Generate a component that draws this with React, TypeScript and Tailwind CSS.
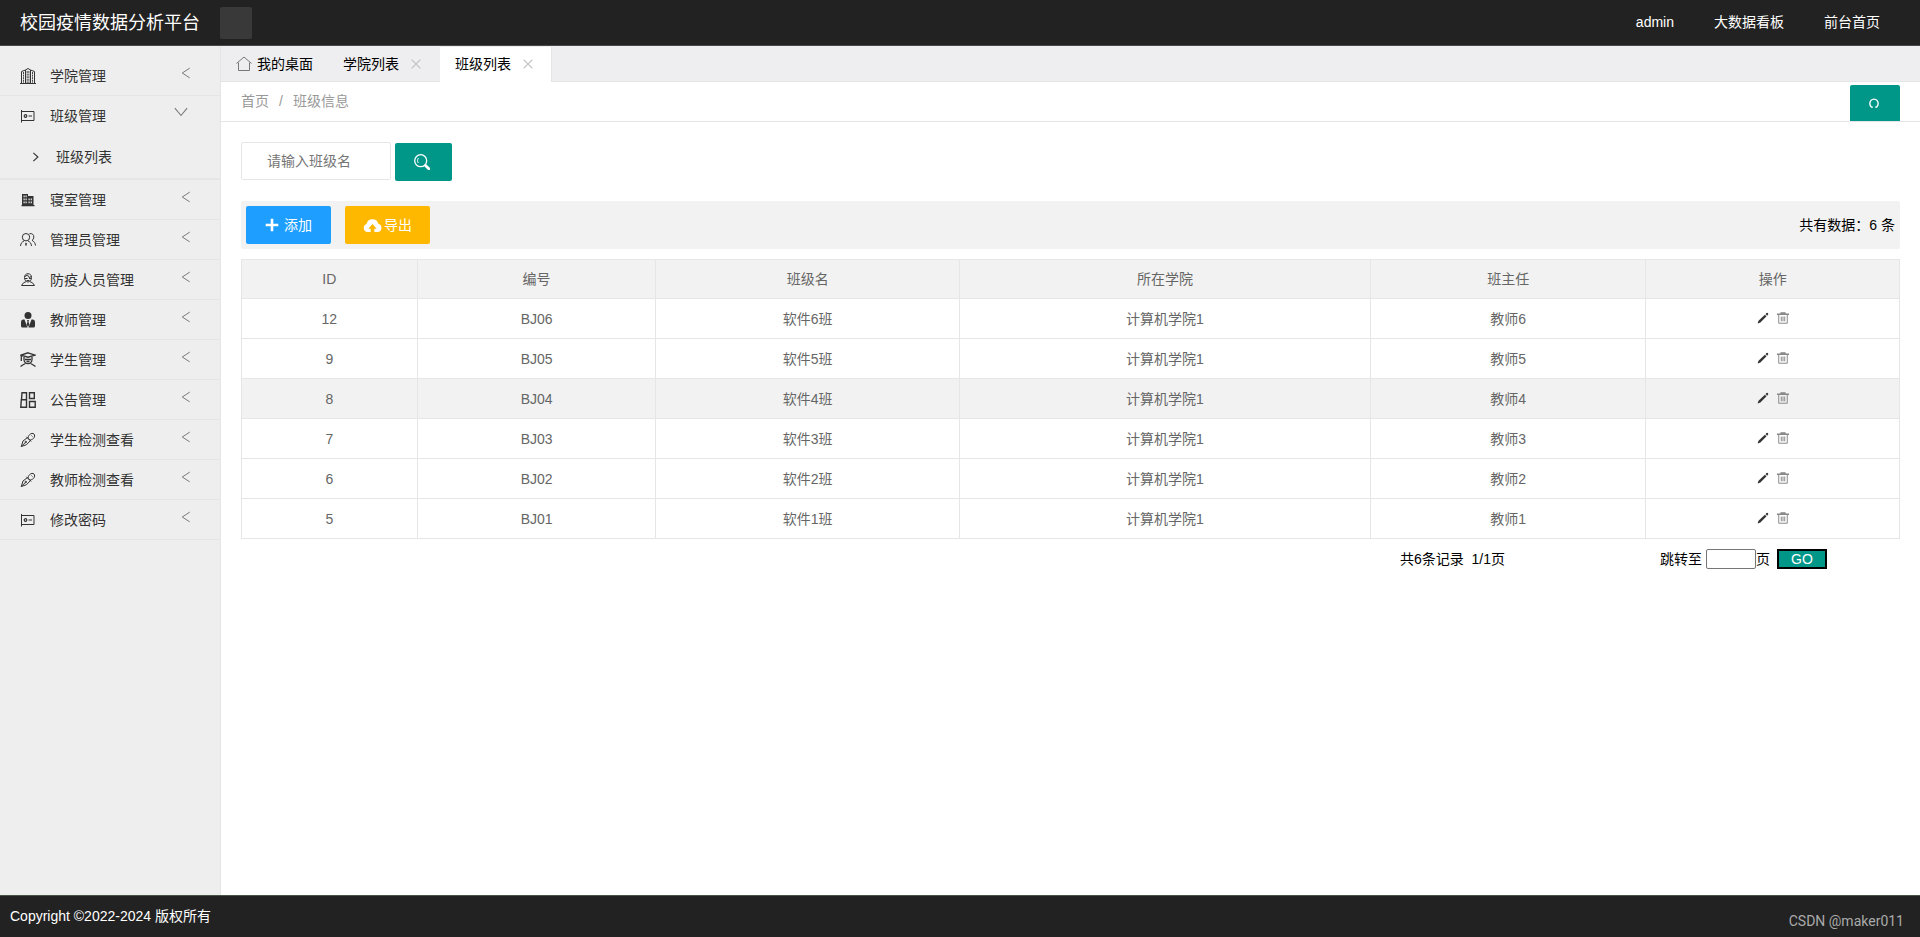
import { useState } from 'react';
import type { ReactNode } from 'react';
import clsx from 'clsx';

function Svg({ children, className = 'size-4' }: { children: ReactNode; className?: string }) {
  return (
    <svg viewBox="0 0 16 16" className={clsx('shrink-0', className)} fill="none" stroke="currentColor" strokeWidth="1" aria-hidden="true">
      {children}
    </svg>
  );
}

const CollegeIcon = () => (
  <Svg>
    <path d="M0 15.500h16M1.500 15V3.500L5.500 2V15M5.500 2 8 .5 10.500 2M10.500 15V2l4 1.500V15" />
    <path d="M3.500 4v11M7.200 3v12M8.900 3v12M12.500 4v11" strokeDasharray="2 .6" strokeWidth=".9" />
  </Svg>
);

const CardIcon = () => (
  <Svg>
    <path d="M1.500 2v12.500M1.500 3.500h12.500v9h-12.500" />
    <circle cx="5.500" cy="8" r="1.300" strokeWidth="1.200" />
    <path d="M8.500 8h3.500" />
  </Svg>
);

const DormIcon = () => (
  <Svg>
    <path fill="currentColor" stroke="none" fillRule="evenodd" d="M2 2h6v2h5.500v9H14.500v1.200H1.500V13H2zM3.500 3.500v1.700h1.200V3.500zm2 0v1.700h1.200V3.500zm-2 3v1.700h1.200V6.500zm2 0v1.700h1.200V6.500zm-2 3v1.700h1.200V9.500zm2 0v1.700h1.200V9.500zm3-3v1.700h1.200V6.500zm2.200 0v1.700h1.200V6.500zm-2.200 3v1.700h1.200V9.500zm2.200 0v1.700h1.200V9.500z" />
  </Svg>
);

const AdminIcon = () => (
  <Svg>
    <circle cx="6" cy="5.200" r="3.700" />
    <path d="M.5 14c.2-2.700 1.600-4.200 3.500-5M11.500 14c-.2-2.700-1.600-4.200-3.500-5M9.500 1.700c2.500-.7 4.500 1 4.300 3.300-.1 1.700-.8 2.700-1.800 3.400 2 .9 3.300 2.700 3.500 5.100M6 10.800v3M5 12h2" />
  </Svg>
);

const MedicIcon = () => (
  <Svg>
    <path d="M4.500 5.500C4.500 3 6 1.700 8 1.700s3.500 1.300 3.500 3.800S10 10 8 10 4.500 8 4.500 5.500ZM5 4.500l2.500-1.500 1.500 2.500 2.500-1M5 6.500h2.500M9 6.500h2M6.500 8.500h3" />
    <path d="M6 9.700 3.500 10.800 1.500 13.500h13L12.500 10.800 10 9.700" />
  </Svg>
);

const TeacherIcon = () => (
  <Svg>
    <circle cx="8" cy="3.500" r="3.500" fill="currentColor" stroke="none" />
    <path fill="currentColor" stroke="none" d="M4.500 7.500 7.500 15.500H2.500Q1 15.500 1 14V10Q1 7.800 3 7.500ZM11.500 7.500 8.500 15.500h5Q15 15.500 15 14V10q0-2.200-2-2.500zM7 8h2l-.5 1.600.8 3L8 15l-1.300-2.400.8-3z" />
  </Svg>
);

const StudentIcon = () => (
  <Svg>
    <path strokeWidth="1.300" d="M8 .8 15 3.200 8 5.200 1 3.200zM1.300 3.500V9M4 5v2.500C4 10 6 11.600 8 11.600S12 10 12 7.500V5" />
    <path strokeWidth="1.300" d="M5.500 11.500C3 12.500 2 13.500 .5 14.500M10.500 11.500c2.500 1 3.500 2 5 3M5 7.500h6M6.500 9.500h3" />
  </Svg>
);

const NoticeIcon = () => (
  <Svg>
    <path strokeWidth="1.400" d="M2 .8h4.500v7H1.500zM1.300 7.800H6.500v7.400H.8zM9.500 .8h4.800v5.700H9.500zM9.500 9.500h5.700v5.700H9.500z" />
  </Svg>
);

const TestIcon = () => (
  <Svg>
    <path d="M1.300 14.500 3 9 7.300 5.700l3 3-3.800 4zM1.300 14.500l4-4M6.500 4.800l4.700 4.700M8 6c.5-1 .2-2 1.500-3.300 1.400-1.500 3.500-1.700 4.500-.7s.8 3-.5 4.400C12.200 7.700 11 7.600 10 8.200M11.500 3.500l1 1" />
    <circle cx="5.800" cy="10" r=".8" />
  </Svg>
);

const HomeIcon = () => (
  <Svg>
    <path d="M.5 7.500 8 1l7.500 6.500M2.500 6.500v8h11v-8" stroke="#777" />
  </Svg>
);

const CloseIcon = () => (
  <Svg className="size-[10px] text-[#c2c2c2]">
    <path strokeWidth="1.900" d="m1 1 14 14M15 1 1 15" />
  </Svg>
);

interface MenuItem {
  label: string;
  icon: ReactNode;
  children?: string[];
}

const menu: MenuItem[] = [
  { label: '学院管理', icon: <CollegeIcon /> },
  { label: '班级管理', icon: <CardIcon />, children: ['班级列表'] },
  { label: '寝室管理', icon: <DormIcon /> },
  { label: '管理员管理', icon: <AdminIcon /> },
  { label: '防疫人员管理', icon: <MedicIcon /> },
  { label: '教师管理', icon: <TeacherIcon /> },
  { label: '学生管理', icon: <StudentIcon /> },
  { label: '公告管理', icon: <NoticeIcon /> },
  { label: '学生检测查看', icon: <TestIcon /> },
  { label: '教师检测查看', icon: <TestIcon /> },
  { label: '修改密码', icon: <CardIcon /> },
];

const columns = [
  { title: 'ID', width: 'w-[10.6%]' },
  { title: '编号', width: 'w-[14.4%]' },
  { title: '班级名', width: 'w-[18.3%]' },
  { title: '所在学院', width: 'w-[24.8%]' },
  { title: '班主任', width: 'w-[16.6%]' },
  { title: '操作', width: 'w-[15.3%]' },
];

const rows = [
  { id: 12, code: 'BJ06', name: '软件6班', college: '计算机学院1', teacher: '教师6' },
  { id: 9, code: 'BJ05', name: '软件5班', college: '计算机学院1', teacher: '教师5' },
  { id: 8, code: 'BJ04', name: '软件4班', college: '计算机学院1', teacher: '教师4' },
  { id: 7, code: 'BJ03', name: '软件3班', college: '计算机学院1', teacher: '教师3' },
  { id: 6, code: 'BJ02', name: '软件2班', college: '计算机学院1', teacher: '教师2' },
  { id: 5, code: 'BJ01', name: '软件1班', college: '计算机学院1', teacher: '教师1' },
];

function Header() {
  return (
    <header className="flex h-[46px] shrink-0 items-center border-b border-[#484848] bg-[#222] pr-10 pl-5 text-white">
      <a href="#" className="mr-5 w-[180px] text-lg leading-[44px]">校园疫情数据分析平台</a>
      <button type="button" aria-label="收起菜单" className="size-8 rounded-xs bg-[#393939]" />
      <nav className="ml-auto flex gap-10 pb-0.5">
        <a href="#">admin</a>
        <a href="#">大数据看板</a>
        <a href="#">前台首页</a>
      </nav>
    </header>
  );
}

function Sidebar() {
  const [open, setOpen] = useState('班级管理');

  return (
    <aside className="w-[221px] shrink-0 border-r border-[#e5e5e5] bg-[#eee] pt-[10px] text-[#333]">
      <ul>
        {menu.map((item) => {
          const expanded = open === item.label && !!item.children;
          return (
            <li key={item.label} className="border-b border-[#e5e5e5]">
              <button
                type="button"
                aria-expanded={expanded}
                className="flex h-[39px] w-full items-center pr-7 pl-5"
                onClick={() => setOpen(expanded ? '' : item.label)}
              >
                {item.icon}
                <span className="ml-[14px]">{item.label}</span>
                <span className="ml-auto pb-[6px] text-[#777]">
                  {expanded ? (
                    <Svg className="mr-1 mb-0.5 size-[14px]"><path strokeWidth="1.200" d="M1 3.500 8 12l7-8.500" /></Svg>
                  ) : (
                    <Svg className="size-3"><path strokeWidth="1.300" d="m13 1.500-10 6.500 10 6.500" /></Svg>
                  )}
                </span>
              </button>
              {expanded && (
                <ul className="border-b border-[#e5e5e5]">
                  {item.children?.map((child) => (
                    <li key={child}>
                      <a href="#" className="flex h-[43px] items-center pl-[30px]">
                        <Svg className="size-3"><path strokeWidth="1.500" d="m4.500 2.500 6 5.500-6 5.500" /></Svg>
                        <span className="ml-[14px]">{child}</span>
                      </a>
                    </li>
                  ))}
                </ul>
              )}
            </li>
          );
        })}
      </ul>
    </aside>
  );
}

function TabBar() {
  return (
    <div className="flex h-9 items-end border-b border-[#e5e5e5] bg-[#eeeef0] text-black">
      <button type="button" className="flex h-[35px] items-center gap-[5px] px-[15px]">
        <HomeIcon />
        我的桌面
      </button>
      <div className="flex h-[35px] items-center gap-3 pr-[19px] pl-[15px]">
        <button type="button">学院列表</button>
        <button type="button" aria-label="关闭学院列表"><CloseIcon /></button>
      </div>
      <div className="-mb-px flex h-[35px] items-center gap-3 border-r border-[#e5e5e5] bg-white pr-[18px] pb-0.5 pl-[15px]">
        <button type="button">班级列表</button>
        <button type="button" aria-label="关闭班级列表"><CloseIcon /></button>
      </div>
    </div>
  );
}

function ClassTable() {
  return (
    <table className="mt-[10px] w-full table-fixed border-collapse text-center text-[#666]">
      <thead>
        <tr className="h-[39px] bg-[#f2f2f2]">
          {columns.map((col) => (
            <th key={col.title} className={clsx('border border-[#e6e6e6] font-normal', col.width)}>{col.title}</th>
          ))}
        </tr>
      </thead>
      <tbody>
        {rows.map((row) => (
          <tr key={row.id} className={clsx('h-10', row.id === 8 && 'bg-[#f2f2f2]')}>
            <td className="border border-[#e6e6e6]">{row.id}</td>
            <td className="border border-[#e6e6e6]">{row.code}</td>
            <td className="border border-[#e6e6e6]">{row.name}</td>
            <td className="border border-[#e6e6e6]">{row.college}</td>
            <td className="border border-[#e6e6e6]">{row.teacher}</td>
            <td className="border border-[#e6e6e6]">
              <div className="flex items-center justify-center gap-2 pb-px">
                <button type="button" aria-label="编辑" className="text-[#333]">
                  <Svg className="size-3">
                    <path fill="currentColor" stroke="none" d="M.8 15.200 2 11.500 10.500 3.500l2.200 2.200L4.500 14zM11.300 2.700 12.800 1.200q.8-.5 1.500.2l.5.5q.6.800 0 1.500L13.500 4.900z" />
                  </Svg>
                </button>
                <button type="button" aria-label="删除" className="text-[#888]">
                  <Svg className="size-3">
                    <path strokeWidth="1.800" d="M0 3h16M4.500 1.200h7" />
                    <path strokeWidth="1.300" d="M2.300 3v12h11.400V3M5.700 6v6.500M8 6v6.500M10.300 6v6.500" />
                  </Svg>
                </button>
              </div>
            </td>
          </tr>
        ))}
      </tbody>
    </table>
  );
}

function Pager() {
  return (
    <div className="mt-[10px] flex items-center justify-end pr-[73px] text-black">
      <span className="mr-[155px] whitespace-pre">共6条记录  1/1页</span>
      <label htmlFor="page">跳转至</label>
      <input id="page" type="text" className="ml-1 h-5 w-[50px] rounded-xs border border-[#767676] bg-white px-1" />
      <span>页</span>
      <button type="button" className="ml-[7px] h-5 w-[50px] border-2 border-black bg-[#009688] leading-4 text-white">GO</button>
    </div>
  );
}

export default function App() {
  const [keyword, setKeyword] = useState('');

  return (
    <div className="flex h-screen flex-col bg-white font-['Liberation_Sans','Noto_Sans_CJK_SC',sans-serif] text-sm">
      <Header />
      <div className="flex min-h-0 flex-1">
        <Sidebar />
        <main className="min-w-0 flex-1">
          <TabBar />
          <div className="flex h-10 items-end justify-between border-b border-[#e5e5e5] px-5">
            <nav className="flex gap-[10px] self-center pb-0.5 text-[#999]">
              <a href="#">首页</a>
              <span>/</span>
              <a href="#">班级信息</a>
            </nav>
            <button type="button" aria-label="刷新" className="flex h-9 w-[50px] items-center justify-center rounded-t-xs bg-[#009688] pr-0.5 text-white">
              <Svg className="size-3">
                <path strokeWidth="1.800" d="M6.500 13.500H4.500C2.500 11 2 7 4 4.500 6 2.200 10 2.200 12 4.500c2 2.500 1.500 6.500-.5 9H9.500" />
              </Svg>
            </button>
          </div>
          <div className="p-5">
            <form className="flex gap-1" onSubmit={(e) => e.preventDefault()}>
              <input
                type="text"
                aria-label="班级名"
                placeholder="请输入班级名"
                value={keyword}
                onChange={(e) => setKeyword(e.target.value)}
                className="h-[38px] w-[150px] rounded-xs border border-[#e6e6e6] px-[25px] placeholder:text-[#757575]"
              />
              <button type="submit" aria-label="搜索" className="mt-px flex h-[38px] w-[57px] items-center justify-center rounded-xs bg-[#009688] pr-[3px] text-white">
                <Svg>
                  <circle cx="6.700" cy="6.700" r="6" strokeWidth="1.300" />
                  <path d="M4.500 4C3.300 5.500 3.300 7.500 4.300 9" />
                  <path d="m11.500 11.500 3.300 3.300" strokeWidth="2.800" strokeLinecap="round" />
                </Svg>
              </button>
            </form>
            <div className="mt-5 flex h-12 items-center justify-between rounded-xs bg-[#f2f2f2] px-[5px]">
              <div className="flex gap-[14px]">
                <button type="button" className="flex h-[38px] w-[85px] items-center justify-center gap-[5px] rounded-xs bg-[#1e9fff] text-white">
                  <Svg className="size-[14px]"><path strokeWidth="3" d="M8 .8v14.400M.8 8h14.400" /></Svg>
                  添加
                </button>
                <button type="button" className="flex h-[38px] w-[85px] items-center justify-center gap-0.5 rounded-xs bg-[#ffb800] text-white">
                  <svg viewBox="0 0 20 16" className="h-[15px] w-[19px]" fill="currentColor" aria-hidden="true">
                    <path d="M4.800 15A4.500 4.500 0 0 1 3.600 6.300 6.500 6.500 0 0 1 16.200 6 4.600 4.600 0 0 1 15.400 15H12V11.500H14.500L10 6.500 5.500 11.500H8V15z" />
                  </svg>
                  导出
                </button>
              </div>
              <span className="text-black">共有数据：6 条</span>
            </div>
            <ClassTable />
            <Pager />
          </div>
        </main>
      </div>
      <footer className="flex h-[42px] shrink-0 items-center justify-between border-t border-[#485048] bg-[#222] pr-4 pl-[10px] text-white">
        <span className="pb-0.5">Copyright ©2022-2024 版权所有</span>
        <span className="pt-2 font-[Roboto,sans-serif] text-[#aaa]">CSDN @maker011</span>
      </footer>
    </div>
  );
}
